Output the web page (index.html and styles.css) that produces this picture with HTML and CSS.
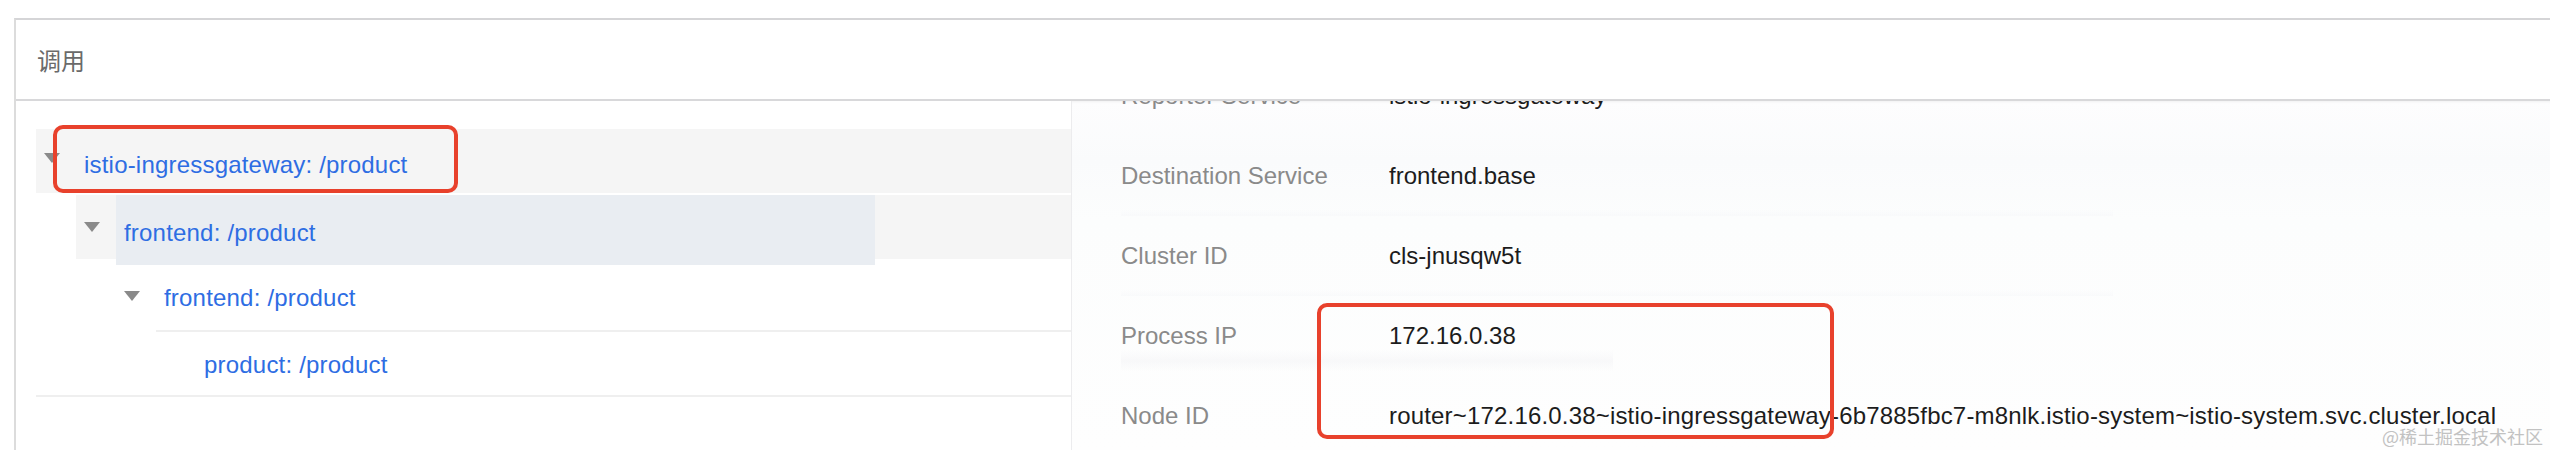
FILE: index.html
```html
<!DOCTYPE html>
<html lang="zh">
<head>
<meta charset="utf-8">
<title>调用</title>
<link rel="stylesheet" href="styles.css">
</head>
<body>
<div class="page">
  <section class="card">
    <header class="card-header">调用</header>
    <div class="card-body">
      <div class="tree-pane">
        <div class="tree">
          <div class="row row-l0">
            <span class="caret"></span>
            <span class="label">istio-ingressgateway: /product</span>
          </div>
          <div class="children">
            <div class="row row-l1">
              <span class="caret"></span>
              <span class="selected"><span class="label">frontend: /product</span></span>
            </div>
            <div class="children">
              <div class="row row-l2">
                <span class="caret"></span>
                <span class="label">frontend: /product</span>
              </div>
              <div class="children children-last">
                <div class="row row-l3">
                  <span class="label">product: /product</span>
                </div>
              </div>
            </div>
          </div>
        </div>
      </div>
      <aside class="detail-pane">
        <dl class="detail-list">
          <div class="detail-row"><dt>Reporter Service</dt><dd>istio-ingressgateway</dd></div>
          <div class="detail-row band-wide"><dt>Destination Service</dt><dd>frontend.base</dd></div>
          <div class="detail-row band-wide"><dt>Cluster ID</dt><dd>cls-jnusqw5t</dd></div>
          <div class="detail-row band-short"><dt>Process IP</dt><dd>172.16.0.38</dd></div>
          <div class="detail-row"><dt>Node ID</dt><dd class="long">router~172.16.0.38~istio-ingressgateway-6b7885fbc7-m8nlk.istio-system~istio-system.svc.cluster.local</dd></div>
        </dl>
      </aside>
    </div>
  </section>
  <div class="mark mark-tree"></div>
  <div class="mark mark-node"></div>
  <div class="watermark">@稀土掘金技术社区</div>
</div>
</body>
</html>
```

FILE: styles.css
```css
html, body {
  margin: 0;
  padding: 0;
  background: #ffffff;
  overflow: hidden;
}

body {
  width: 2550px;
  height: 450px;
  font-family: "Liberation Sans", "Noto Sans CJK SC", Arial, sans-serif;
  font-size: 24px;
  color: #1f1f1f;
}

.page {
  position: relative;
  height: 450px;
  padding: 18px 0 0 14px;
  box-sizing: border-box;
}

.card {
  border-top: 2px solid #d5d5d7;
  border-left: 2px solid #dcdcdc;
  height: 432px;
  box-sizing: border-box;
  display: flex;
  flex-direction: column;
}

.card-header {
  flex: none;
  height: 81px;
  box-sizing: border-box;
  border-bottom: 2px solid #d8d8da;
  padding-left: 21px;
  line-height: 79px;
  font-family: "Noto Sans CJK SC", sans-serif;
  font-size: 24px;
  color: #6a6a6a;
}

.card-body {
  flex: 1;
  display: flex;
  min-height: 0;
}

/* ---------- tree ---------- */
.tree-pane {
  flex: none;
  width: 1055px;
  box-sizing: border-box;
  padding: 28px 0 0 20px;
}

.tree {
  border-bottom: 2px solid #efefef;
}

.children {
  margin-left: 40px;
}

.children-last {
  border-top: 2px solid #efefef;
}

.row {
  display: flex;
  align-items: center;
  padding-left: 8px;
  box-sizing: border-box;
}

.caret {
  flex: none;
  width: 0;
  height: 0;
  border-left: 8px solid transparent;
  border-right: 8px solid transparent;
  border-top: 10px solid #8a8a8a;
  margin-right: 24px;
}

.label {
  color: #2e6de3;
  white-space: nowrap;
  line-height: 27px;
  letter-spacing: 0.2px;
}

.row-l0 {
  height: 64px;
  background: #f5f5f5;
  margin-bottom: 2px;
}

.row-l0 .caret {
  margin-top: -7px;
}

.row-l0 .label {
  padding-top: 7px;
}

.row-l1 {
  height: 64px;
  background: #f5f5f5;
  margin-bottom: 2px;
}

.row-l1 .caret {
  margin-right: 16px;
}

.selected {
  align-self: flex-start;
  flex: none;
  width: 759px;
  height: 70px;
  box-sizing: border-box;
  padding: 4px 0 0 8px;
  background: #e9edf2;
  display: flex;
  align-items: center;
}

.row-l2 {
  height: 69px;
}

.row-l2 .label {
  padding-top: 4px;
}

.row-l3 {
  height: 63px;
  padding-left: 48px;
}

.row-l3 .label {
  padding-top: 2px;
}

/* ---------- detail ---------- */
.detail-pane {
  flex: 1;
  min-width: 0;
  overflow: hidden;
  border-left: 1px solid #ececee;
  background: linear-gradient(180deg, #fdfdfe 0, #fafbfc 60px, #fcfdfd 120px, #fefefe 100%);
  box-shadow: inset 0 3px 3px -2px rgba(0, 0, 0, 0.05);
  padding-left: 49px;
}

.detail-list {
  margin: -45px 0 0 0;
}

.detail-row {
  display: flex;
  height: 80px;
  line-height: 80px;
  white-space: nowrap;
  background-repeat: no-repeat;
}

.detail-row.band-wide {
  background-image: linear-gradient(180deg, rgba(236, 239, 243, 0) 0, rgba(236, 239, 243, 0.45) 50%, rgba(236, 239, 243, 0) 100%);
  background-size: 1000px 24px;
  background-position: -8px 74px;
}

.detail-row.band-short {
  background-image: linear-gradient(180deg, rgba(238, 238, 242, 0) 0, rgba(238, 238, 242, 0.35) 50%, rgba(238, 238, 242, 0) 100%);
  background-size: 500px 22px;
  background-position: -8px 54px;
}

.detail-row dt {
  flex: none;
  width: 268px;
  color: #8a8a8a;
}

.detail-row dd {
  margin: 0;
  color: #1c1c1c;
}

.detail-row dd.long {
  letter-spacing: 0.18px;
}

/* ---------- annotations ---------- */
.mark {
  position: absolute;
  border: 4px solid #e8412c;
  border-radius: 10px;
  box-sizing: border-box;
}

.mark-tree {
  left: 53px;
  top: 125px;
  width: 405px;
  height: 68px;
}

.mark-node {
  left: 1317px;
  top: 303px;
  width: 517px;
  height: 136px;
}

.watermark {
  position: absolute;
  right: 7px;
  top: 425px;
  font-family: "Noto Sans CJK SC", sans-serif;
  font-size: 18px;
  line-height: 22px;
  color: #c2c2c2;
  white-space: nowrap;
}
```
